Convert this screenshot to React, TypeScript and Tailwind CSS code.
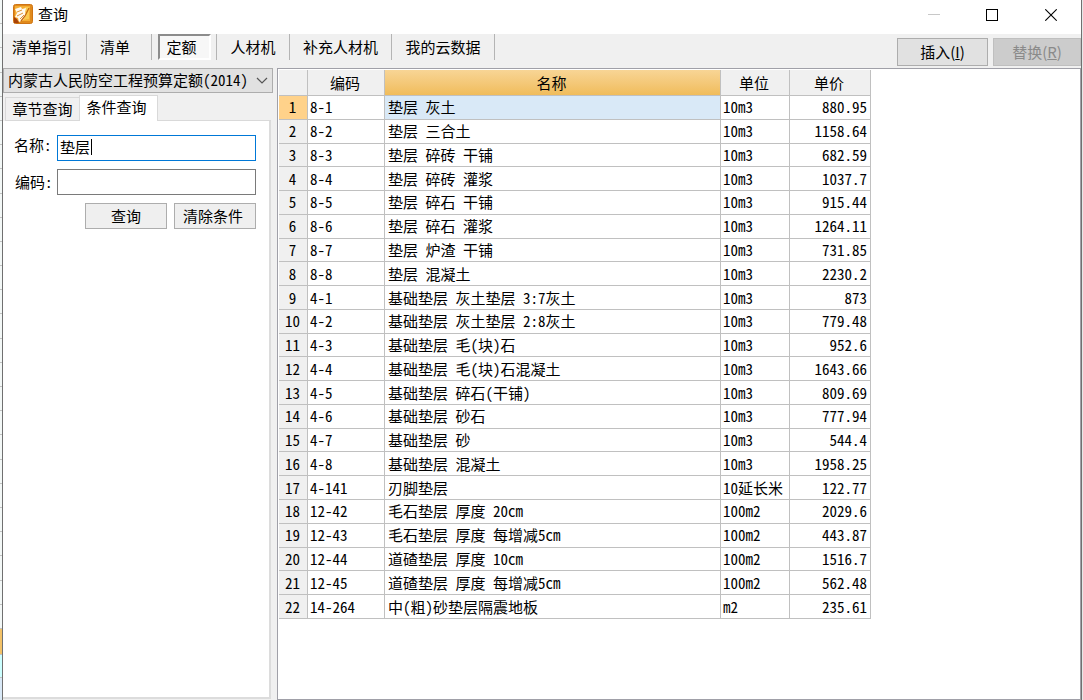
import React from "react";

const rows = [
  ["8-1", "垫层 灰土", "10m3", "880.95"],
  ["8-2", "垫层 三合土", "10m3", "1158.64"],
  ["8-3", "垫层 碎砖 干铺", "10m3", "682.59"],
  ["8-4", "垫层 碎砖 灌浆", "10m3", "1037.7"],
  ["8-5", "垫层 碎石 干铺", "10m3", "915.44"],
  ["8-6", "垫层 碎石 灌浆", "10m3", "1264.11"],
  ["8-7", "垫层 炉渣 干铺", "10m3", "731.85"],
  ["8-8", "垫层 混凝土", "10m3", "2230.2"],
  ["4-1", "基础垫层 灰土垫层 3:7灰土", "10m3", "873"],
  ["4-2", "基础垫层 灰土垫层 2:8灰土", "10m3", "779.48"],
  ["4-3", "基础垫层 毛(块)石", "10m3", "952.6"],
  ["4-4", "基础垫层 毛(块)石混凝土", "10m3", "1643.66"],
  ["4-5", "基础垫层 碎石(干铺)", "10m3", "809.69"],
  ["4-6", "基础垫层 砂石", "10m3", "777.94"],
  ["4-7", "基础垫层 砂", "10m3", "544.4"],
  ["4-8", "基础垫层 混凝土", "10m3", "1958.25"],
  ["4-141", "刃脚垫层", "10延长米", "122.77"],
  ["12-42", "毛石垫层 厚度 20cm", "100m2", "2029.6"],
  ["12-43", "毛石垫层 厚度 每增减5cm", "100m2", "443.87"],
  ["12-44", "道碴垫层 厚度 10cm", "100m2", "1516.7"],
  ["12-45", "道碴垫层 厚度 每增减5cm", "100m2", "562.48"],
  ["14-264", "中(粗)砂垫层隔震地板", "m2", "235.61"],
];

const AppIcon = () => (
  <svg width="20" height="20" viewBox="0 0 20 20" aria-hidden="true">
    <rect x="0.5" y="0.5" width="19" height="19" rx="2" fill="#e08a1c" stroke="#cf7414" />
    <path d="M2 2h15v15H2z" fill="#f6ae34" />
    <path d="M12 3h4v12l-7 1z" fill="#fbcb50" />
    <path d="M2 5l6-2 1 2 4-1-1 4 1 3-3 5-4 2-1-4-3-1 2-4z" fill="#fffaf0" />
    <path d="M4 8l5-2M4 12l6-3M7 15l4-4" stroke="#dd9338" strokeWidth="1" fill="none" />
    <path d="M16 4l-4 8-4 5" stroke="#c8690c" strokeWidth="1.3" fill="none" />
    <path d="M1 13l3 2 2 4H1z" fill="#a94208" />
  </svg>
);

const TitleBar = () => (
  <header className="flex h-[34px] shrink-0 items-start bg-white">
    <div className="flex items-center gap-[5px] pl-[10px] pt-1">
      <AppIcon />
      <h1 className="text-[15px] leading-5">查询</h1>
    </div>
    <div className="ml-auto flex pr-px pt-px">
      <button aria-label="最小化" disabled className="flex h-7 w-[58px] items-center justify-center">
        <svg width="12" height="12" viewBox="0 0 12 12" shapeRendering="crispEdges">
          <path d="M0 5.5h12" stroke="#c8c8c8" />
        </svg>
      </button>
      <button aria-label="最大化" className="flex h-7 w-[58px] items-center justify-center">
        <svg width="12" height="12" viewBox="0 0 12 12" shapeRendering="crispEdges">
          <path d="M.5 .5h11v11H.5z" stroke="#000" fill="none" />
        </svg>
      </button>
      <button aria-label="关闭" className="flex h-7 w-[59px] items-center justify-center">
        <svg width="12" height="12" viewBox="0 0 12 12">
          <path d="M.3 .3l11.4 11.4M11.7 .3L.3 11.7" stroke="#000" strokeWidth="1.1" />
        </svg>
      </button>
    </div>
  </header>
);

const Separator = () => <span className="h-[26px] w-px shrink-0 bg-[#b4b4b4]" />;

const Toolbar = () => (
  <div className="flex h-[34px] shrink-0 items-start">
    <nav className="flex h-[26px] items-center whitespace-nowrap">
      <button className="w-[83px] pb-px pr-[5px] text-center">清单指引</button>
      <Separator />
      <button className="w-16 pb-px pr-2 text-center">清单</button>
      <Separator />
      <button className="ml-[6px] mr-[5px] h-[26px] w-[53px] border-2 border-b-white border-l-[#8c8c8c] border-r-white border-t-[#8c8c8c] bg-[#f7f7f7] pr-[6px] text-center">
        定额
      </button>
      <Separator />
      <button className="w-[72px] pb-px text-center">人材机</button>
      <Separator />
      <button className="w-[101px] pb-px text-center">补充人材机</button>
      <Separator />
      <button className="w-[102px] pb-px text-center">我的云数据</button>
      <Separator />
    </nav>
    <div className="ml-auto flex gap-[5px] pt-1 font-['Noto_Sans_CJK_SC',sans-serif]">
      <button className="h-7 w-[91px] border border-[#adadad] bg-[#e1e1e1]">
        插入(<u>I</u>)
      </button>
      <button disabled className="h-7 w-[88px] border border-[#bfbfbf] bg-[#cccccc] text-[#8a8a8a]">
        替换(<u>R</u>)
      </button>
    </div>
  </div>
);

const SearchPanel = () => (
  <aside className="flex w-[270px] shrink-0 flex-col">
    <div className="relative">
      <select
        aria-label="定额库"
        className="block h-[25px] w-full appearance-none border border-[#adadad] bg-[#e1e1e1] pb-[2px] pl-1 leading-5"
      >
        <option>内蒙古人民防空工程预算定额(2014)</option>
      </select>
      <svg className="pointer-events-none absolute right-[5px] top-[9px]" width="12" height="8" viewBox="0 0 12 8">
        <path d="M1 1l5 5 5-5" stroke="#555" strokeWidth="1.2" fill="none" />
      </svg>
    </div>
    <div className="flex items-end pl-[2px] pt-[2px]" role="tablist">
      <button role="tab" aria-selected="false" className="h-[24px] w-[74px] border border-r-0 border-[#d9d9d9] leading-5">
        章节查询
      </button>
      <button role="tab" aria-selected="true" className="h-[26px] w-[79px] border border-b-0 border-[#d9d9d9] bg-white pb-1 pr-1 leading-5">
        条件查询
      </button>
      <span className="mr-[2px] grow border-b border-[#d9d9d9]" />
    </div>
    <form
      className="mb-px mr-[2px] flex grow flex-col border-b-2 border-r-2 border-[#dcdcdc] bg-white pl-[11px] pr-[13px] pt-[14px]"
      onSubmit={(e) => e.preventDefault()}
    >
      <div className="flex">
        <label htmlFor="name" className="w-[43px] shrink-0 leading-5">
          名称:
        </label>
        <div className="relative grow">
          <input
            id="name"
            defaultValue="垫层"
            className="block h-[26px] w-full border border-[#0078d7] bg-white px-[2px] pb-1 outline-none"
          />
          <span className="absolute left-[34px] top-1 h-4 w-px bg-black" />
        </div>
      </div>
      <div className="mt-2 flex items-center">
        <label htmlFor="code" className="w-[43px] shrink-0 pl-px leading-5">
          编码:
        </label>
        <input id="code" className="block h-[26px] w-full min-w-0 grow border border-[#7a7a7a] bg-white px-[2px] outline-none" />
      </div>
      <div className="mt-2 flex justify-end gap-[7px]">
        <button type="submit" className="h-[26px] w-[82px] border border-[#adadad] bg-[#efefef] pb-px">
          查询
        </button>
        <button type="reset" className="h-[26px] w-[82px] border border-[#adadad] bg-[#efefef] pb-px pr-1">
          清除条件
        </button>
      </div>
    </form>
  </aside>
);

const cell = "border-b border-r border-[#c0c0c0] p-0";

const QuotaTable = () => (
  <main className="ml-1 grow border border-[#a0a0a8] bg-white pl-px pt-px">
    <table className="h-[549px] w-[592px] table-fixed border-separate border-spacing-0 leading-5">
      <colgroup>
        <col className="w-[29px]" />
        <col className="w-[77px]" />
        <col />
        <col className="w-[69px]" />
        <col className="w-[81px]" />
      </colgroup>
      <thead>
        <tr className="h-[26px] bg-[#f0f0f0]">
          <th className={cell}></th>
          <th className={`${cell} pr-[2px] font-normal`}>编码</th>
          <th className={`${cell} bg-linear-to-b from-[#f8d595] to-[#f0bc5a] pr-[2px] font-normal`}>名称</th>
          <th className={`${cell} pr-[2px] font-normal`}>单位</th>
          <th className={`${cell} pr-[2px] font-normal`}>单价</th>
        </tr>
      </thead>
      <tbody>
        {rows.map(([code, name, unit, price], i) => (
          <tr key={code}>
            <th className={`${cell} pr-px font-normal ${i === 0 ? "bg-[#ffd28a]" : "bg-[#f0f0f0]"}`}>{i + 1}</th>
            <td className={`${cell} pl-[2px]`}>{code}</td>
            <td className={`${cell} pl-[3px] ${i === 0 ? "bg-[#d9e9f7]" : ""}`}>{name}</td>
            <td className={`${cell} pl-[2px]`}>{unit}</td>
            <td className={`${cell} pr-[3px] text-right`}>{price}</td>
          </tr>
        ))}
      </tbody>
    </table>
  </main>
);

// sliver of the parent window that shows beside the dialog
const Backdrop = () => (
  <div className="flex w-[2px] shrink-0 flex-col bg-[#f3f8f7]">
    <div className="flex grow flex-col">
      {Array.from({ length: 26 }, (_, i) => (
        <div key={i} className="grow border-b border-[#c3c3c3]" />
      ))}
    </div>
    <div className="h-[25px] bg-[#f3c268]" />
    <div className="h-6 border-y border-[#c3c3c3] bg-[#ccffff]" />
    <div className="h-[22px] bg-[#d9e9f7]" />
  </div>
);

export default function App() {
  return (
    <div className="flex h-screen overflow-hidden bg-white font-['Noto_Sans_Mono_CJK_SC','Noto_Sans_CJK_SC',monospace] text-[15px] leading-5 text-black">
      <Backdrop />
      <div className="flex min-w-0 grow flex-col border-x border-[#707070] bg-[#f0f0f0]">
        <TitleBar />
        <Toolbar />
        <div className="flex min-h-0 grow">
          <SearchPanel />
          <QuotaTable />
        </div>
      </div>
      <div className="w-px shrink-0 bg-[#e4e8e8]" />
    </div>
  );
}
